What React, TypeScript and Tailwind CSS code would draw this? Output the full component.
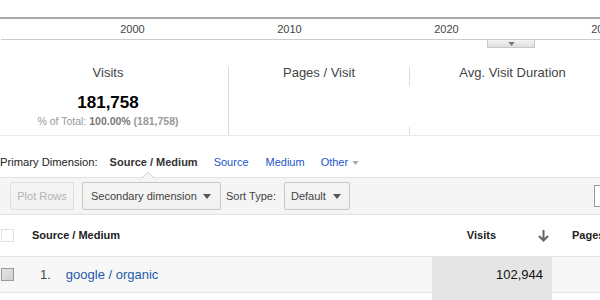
import React from 'react';

const years = ['2000', '2010', '2020', '2030'];

const Caret: React.FC<{ className?: string }> = ({ className }) => (
    <svg width="8" height="5" viewBox="0 0 8 5" className={className}>
        <path d="M0 0 L8 0 L4 5 Z" fill="currentColor" />
    </svg>
);

const Btn: React.FC<{ children: React.ReactNode; className?: string }> = ({ children, className }) => (
    <div className={`h-[28px] shrink-0 flex items-center rounded-[2px] border text-[11px] bg-gradient-to-b from-[#f5f5f5] to-[#f1f1f1] ${className ?? ''}`}>
        {children}
    </div>
);

const App: React.FC = () => {
    return (
        <div className="w-[600px] h-[300px] overflow-hidden bg-white font-['Liberation_Sans',Arial,sans-serif] text-[#444]">
            {/* timeline axis */}
            <div className="h-[17px]" />
            <div className="h-[2px] bg-[#a8a8a8]" />
            <div className="h-[20px] flex pl-[54px] text-[11px] leading-[20px] text-[#444] whitespace-nowrap">
                {years.map(y => (
                    <div key={y} className="w-[157px] shrink-0 text-center">{y}</div>
                ))}
            </div>
            <div className="ml-[1px] h-[1px] bg-[#cccccc]" />
            <div className="h-[8px]">
                <div className="ml-[487px] w-[48px] h-[8px] border border-t-0 border-[#c8c8c8] bg-gradient-to-b from-[#f4f4f4] to-[#dedede] flex items-center justify-center">
                    <Caret className="text-[#777] w-[7px] h-[4px]" />
                </div>
            </div>

            {/* scorecards */}
            <div className="h-[88px] pt-[19px] flex border-b border-[#ebebeb]">
                <div className="w-[229px] shrink-0 pr-[12px] border-r border-[#dcdcdc] flex flex-col items-center">
                    <div className="text-[13px] leading-[12px] text-[#444]">Visits</div>
                    <div className="mt-[14px] text-[17px] leading-[20px] font-bold text-black">181,758</div>
                    <div className="mt-[2px] text-[10.5px] leading-[13px] text-[#999] whitespace-nowrap">
                        % of Total: <span className="font-bold text-[#777]">100.00%</span> <span className="font-bold text-[#999]">(181,758)</span>
                    </div>
                </div>
                <div className="w-[180px] shrink-0 flex flex-col items-center">
                    <div className="text-[13px] leading-[12px] text-[#444]">Pages / Visit</div>
                </div>
                <div className="w-[1px] shrink-0 flex flex-col justify-between">
                    <div className="h-[19px] bg-[#dcdcdc]" />
                    <div className="h-[8px] bg-[#dcdcdc]" />
                </div>
                <div className="w-[205px] shrink-0 flex flex-col items-center">
                    <div className="text-[13px] leading-[12px] text-[#444] whitespace-nowrap">Avg. Visit Duration</div>
                </div>
            </div>

            {/* primary dimension */}
            <div className="h-[41px] pt-[19px] flex items-start text-[11px] leading-[15px] whitespace-nowrap">
                <span className="text-[11.2px] text-[#222]">Primary Dimension:</span>
                <span className="ml-[12px] font-bold text-[#333]">Source / Medium</span>
                <span className="ml-[16px] text-[#2255cc]">Source</span>
                <span className="ml-[17px] text-[#2255cc]">Medium</span>
                <span className="ml-[16px] text-[#2255cc] flex items-center">
                    Other
                    <Caret className="ml-[4px] text-[#aaa] w-[7px] h-[4px]" />
                </span>
            </div>

            {/* toolbar */}
            <div className="relative h-[38px] border-y border-[#e2e2e2] bg-[#f5f5f5] pt-[4px] flex items-start whitespace-nowrap">
                <svg width="12" height="7" viewBox="0 0 12 7" className="absolute left-[142px] top-[-7px]">
                    <path d="M0 7 L6 1 L12 7" fill="#f5f5f5" stroke="#d6d6d6" strokeWidth="1" />
                </svg>
                <Btn className="ml-[10px] w-[64px] justify-center border-[#e0e0e0] text-[#b3b3b3]">Plot Rows</Btn>
                <Btn className="ml-[8px] w-[139px] pl-[8px] pr-[9px] justify-between border-[#c6c6c6] text-[#444]">
                    Secondary dimension
                    <Caret className="text-[#555]" />
                </Btn>
                <span className="ml-[5px] shrink-0 h-[28px] leading-[28px] text-[11px] text-[#444]">Sort Type:</span>
                <Btn className="ml-[8px] w-[66px] pl-[6px] pr-[8px] justify-between border-[#c6c6c6] text-[#444]">
                    Default
                    <Caret className="text-[#555]" />
                </Btn>
                <div className="ml-[244px] mt-[3px] w-[30px] h-[22px] border border-[#999] bg-white shrink-0" />
            </div>

            {/* table header */}
            <div className="h-[42px] flex items-center border-b border-[#e2e2e2] text-[11px] font-bold text-[#222] whitespace-nowrap">
                <div className="ml-[1px] w-[13px] h-[13px] border border-[#e0e0e0] bg-white shrink-0" />
                <div className="ml-[18px] w-[400px] shrink-0">Source / Medium</div>
                <div className="w-[120px] h-full shrink-0 flex items-center justify-end pr-[3px]">
                    <span>Visits</span>
                    <svg width="11" height="12" viewBox="0 0 11 12" className="ml-[42px]">
                        <path d="M5.5 0 V10 M1 6 L5.5 10.5 L10 6" fill="none" stroke="#666" strokeWidth="2" />
                    </svg>
                </div>
                <div className="ml-[20px]">Pages / Visit</div>
            </div>

            {/* first row */}
            <div className="h-[36px] flex items-stretch border-b border-[#e2e2e2] bg-[#f7f7f7] text-[13px] whitespace-nowrap">
                <div className="w-[432px] shrink-0 flex items-center">
                    <div className="ml-[1px] w-[13px] h-[13px] border border-[#999] bg-gradient-to-br from-[#e6e6e6] to-[#cfcfcf] shrink-0" />
                    <span className="ml-[26px] text-[#444]">1.</span>
                    <span className="ml-[15px] text-[#1c5aa8]">google / organic</span>
                </div>
                <div className="w-[120px] shrink-0 bg-[#e5e5e5] flex items-center justify-end pr-[9px] text-[#111]">102,944</div>
                <div className="flex-1" />
            </div>
            <div className="h-[20px] flex">
                <div className="w-[432px] shrink-0" />
                <div className="w-[120px] shrink-0 bg-[#e5e5e5]" />
            </div>
        </div>
    );
};

export default App;
